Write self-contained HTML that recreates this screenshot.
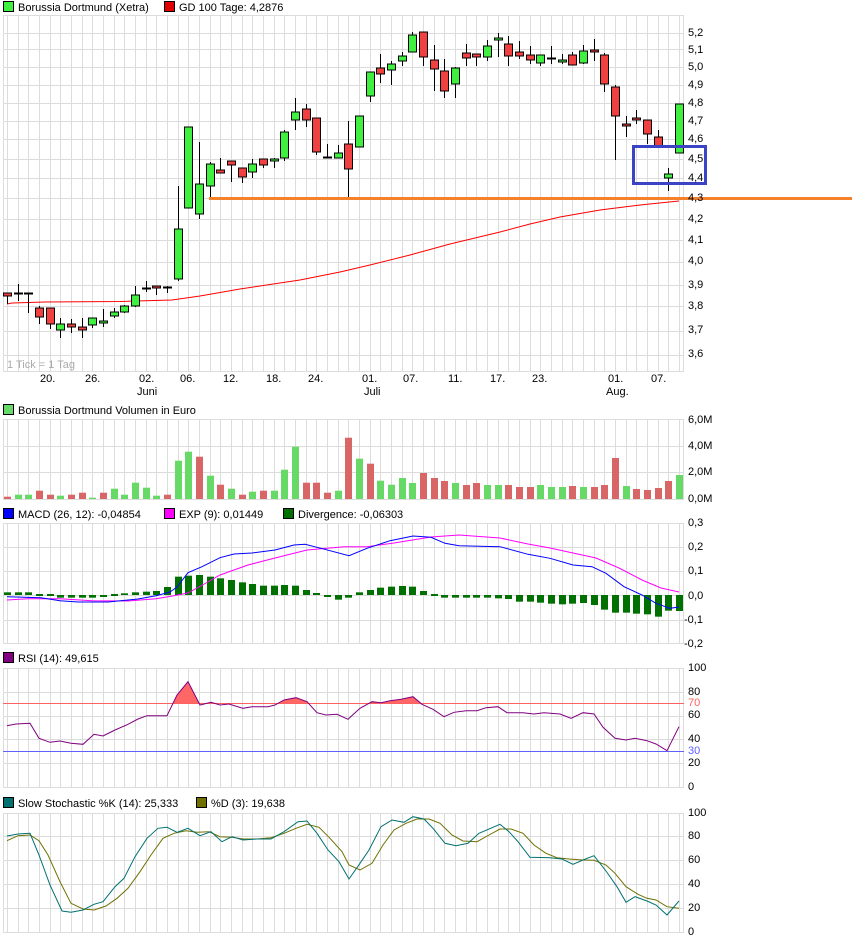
<!DOCTYPE html>
<html><head><meta charset="utf-8">
<style>
html,body{margin:0;padding:0;background:#fff;}
body{width:852px;height:940px;overflow:hidden;position:relative;font-family:"Liberation Sans",sans-serif;font-size:11px;color:#000;}
.t{position:absolute;white-space:nowrap;line-height:12px;}
.sq{display:inline-block;width:9px;height:9px;border:1px solid #000;vertical-align:-1px;margin-right:4px;}
svg{position:absolute;left:0;top:0;}
</style></head><body>
<svg id="g" width="852" height="940"></svg>

<div class="t" style="left:3px;top:1px"><span class="sq" style="background:#40f040"></span>Borussia Dortmund (Xetra)</div>
<div class="t" style="left:164px;top:1px"><span class="sq" style="background:#e00000"></span>GD 100 Tage: 4,2876</div>

<div class="t" style="left:688px;top:27px">5,2</div>
<div class="t" style="left:688px;top:44px">5,1</div>
<div class="t" style="left:688px;top:61px">5,0</div>
<div class="t" style="left:688px;top:79px">4,9</div>
<div class="t" style="left:688px;top:97px">4,8</div>
<div class="t" style="left:688px;top:115px">4,7</div>
<div class="t" style="left:688px;top:133px">4,6</div>
<div class="t" style="left:688px;top:153px">4,5</div>
<div class="t" style="left:688px;top:172px">4,4</div>
<div class="t" style="left:688px;top:192px">4,3</div>
<div class="t" style="left:688px;top:213px">4,2</div>
<div class="t" style="left:688px;top:234px">4,1</div>
<div class="t" style="left:688px;top:255px">4,0</div>
<div class="t" style="left:688px;top:279px">3,9</div>
<div class="t" style="left:688px;top:300px">3,8</div>
<div class="t" style="left:688px;top:324px">3,7</div>
<div class="t" style="left:688px;top:348px">3,6</div>
<div class="t" style="left:7px;top:359px;color:#aaa">1 Tick = 1 Tag</div>

<div class="t" style="left:40px;top:373px">20.</div>
<div class="t" style="left:85px;top:373px">26.</div>
<div class="t" style="left:139px;top:373px">02.</div>
<div class="t" style="left:137px;top:386px">Juni</div>
<div class="t" style="left:180px;top:373px">06.</div>
<div class="t" style="left:223px;top:373px">12.</div>
<div class="t" style="left:266px;top:373px">18.</div>
<div class="t" style="left:308px;top:373px">24.</div>
<div class="t" style="left:362px;top:373px">01.</div>
<div class="t" style="left:364px;top:386px">Juli</div>
<div class="t" style="left:403px;top:373px">07.</div>
<div class="t" style="left:448px;top:373px">11.</div>
<div class="t" style="left:490px;top:373px">17.</div>
<div class="t" style="left:532px;top:373px">23.</div>
<div class="t" style="left:608px;top:373px">01.</div>
<div class="t" style="left:606px;top:386px">Aug.</div>
<div class="t" style="left:651px;top:373px">07.</div>

<div class="t" style="left:3px;top:404px"><span class="sq" style="background:#66d966"></span>Borussia Dortmund Volumen in Euro</div>
<div class="t" style="left:688px;top:414px">6,0M</div>
<div class="t" style="left:688px;top:440px">4,0M</div>
<div class="t" style="left:688px;top:466px">2,0M</div>
<div class="t" style="left:688px;top:493px">0,0M</div>

<div class="t" style="left:3px;top:508px"><span class="sq" style="background:#0000ff"></span>MACD (26, 12): -0,04854</div>
<div class="t" style="left:164px;top:508px"><span class="sq" style="background:#ff00ff"></span>EXP (9): 0,01449</div>
<div class="t" style="left:283px;top:508px"><span class="sq" style="background:#007000"></span>Divergence: -0,06303</div>
<div class="t" style="left:688px;top:517px">0,3</div>
<div class="t" style="left:688px;top:541px">0,2</div>
<div class="t" style="left:688px;top:565px">0,1</div>
<div class="t" style="left:688px;top:590px">0,0</div>
<div class="t" style="left:684px;top:614px">-0,1</div>
<div class="t" style="left:684px;top:638px">-0,2</div>

<div class="t" style="left:3px;top:652px"><span class="sq" style="background:#800080"></span>RSI (14): 49,615</div>
<div class="t" style="left:688px;top:662px">100</div>
<div class="t" style="left:688px;top:686px">80</div>
<div class="t" style="left:688px;top:697px;color:#ff6060">70</div>
<div class="t" style="left:688px;top:709px">60</div>
<div class="t" style="left:688px;top:733px">40</div>
<div class="t" style="left:688px;top:745px;color:#6060ff">30</div>
<div class="t" style="left:688px;top:757px">20</div>
<div class="t" style="left:688px;top:781px">0</div>

<div class="t" style="left:3px;top:797px"><span class="sq" style="background:#007070"></span>Slow Stochastic %K (14): 25,333</div>
<div class="t" style="left:196px;top:797px"><span class="sq" style="background:#707000"></span>%D (3): 19,638</div>
<div class="t" style="left:688px;top:807px">100</div>
<div class="t" style="left:688px;top:830px">80</div>
<div class="t" style="left:688px;top:854px">60</div>
<div class="t" style="left:688px;top:878px">40</div>
<div class="t" style="left:688px;top:902px">20</div>
<div class="t" style="left:688px;top:926px">0</div>

<script>
var s='';
function X(i){return 7+i*10.6667;}
var GC='#dcdcdc';
function panel(top,bot,hl){
  s+='<rect x="3.5" y="'+(top+.5)+'" width="680" height="'+(bot-top)+'" fill="none" stroke="'+GC+'"/>';
  for(var i=0;i<64;i++){var x=Math.round(X(i))+.5;s+='<line x1="'+x+'" y1="'+top+'" x2="'+x+'" y2="'+bot+'" stroke="'+GC+'"/>';}
  hl.forEach(function(y){s+='<line x1="3" y1="'+(y+.5)+'" x2="684" y2="'+(y+.5)+'" stroke="'+GC+'"/>';});
}
panel(15,371,[33,49,67,85,103,121,139,159,178,198,219,240,262,285,306,331,355]);
panel(419,499,[446,472]);
panel(523,643,[547,571,595,620]);
panel(668,787,[692,716,739,763]);
panel(813,932,[836,860,884,908]);

// GD100
var gd=[[7,304],[12,303],[45,302],[120,301.5],[172,300],[200,296],[240,289],[300,280],[340,272],[370,265],[410,255],[450,244],[500,232],[530,224],[560,217],[600,210],[640,205],[679,201]];
s+='<polyline fill="none" stroke="#ff0000" stroke-width="1" points="'+gd.map(function(p){return p.join(',')}).join(' ')+'"/>';

// candles: [bodyTop,bodyBot,wickTop,wickBot,color]
var C=[[293,296,293,304,'r'],[293,293,284,301,'d'],[293,293,293,313,'d'],[308,317,306,324,'r'],[308,324,308,329,'r'],[324,330,318,338,'g'],[324,327,319,333,'r'],[327,330,318,338,'r'],[318,325,318,328,'g'],[321,323,309,327,'g'],[312,316,308,318,'g'],[306,312,305,313,'g'],[295,306,286,307,'g'],[288,289,281,292,'d'],[286,288,286,295,'r'],[287,287,286,293,'d'],[229,279,186,281,'g'],[127,208,127,208,'g'],[184,214,142,219,'g'],[164,186,162,197,'g'],[170,173,158,173,'r'],[161,165,161,182,'r'],[168,177,168,183,'r'],[164,172,159,178,'g'],[159,165,159,168,'r'],[159,161,158,168,'g'],[132,158,130,161,'g'],[112,120,98,130,'g'],[109,120,104,127,'r'],[118,152,118,155,'r'],[157,157,144,157,'d'],[153,158,145,158,'g'],[144,169,121,197,'r'],[116,147,116,147,'g'],[72,96,72,102,'g'],[68,74,54,83,'r'],[64,70,61,85,'g'],[56,61,52,66,'g'],[35,52,32,52,'g'],[32,57,32,66,'r'],[60,69,45,91,'r'],[71,91,59,98,'r'],[68,84,67,98,'g'],[53,58,44,66,'r'],[54,57,54,66,'r'],[46,57,40,61,'g'],[38,40,33,57,'g'],[44,56,36,66,'r'],[52,56,41,59,'r'],[55,60,46,64,'r'],[55,63,55,66,'g'],[58,58,46,64,'d'],[60,62,54,64,'g'],[55,65,52,65,'r'],[51,63,45,64,'g'],[50,52,39,61,'r'],[55,84,53,92,'r'],[87,116,85,160,'r'],[124,126,116,137,'r'],[118,120,110,124,'r'],[120,134,120,144,'r'],[137,147,130,147,'r'],[174,178,168,191,'g'],[104,153,104,153,'g']];
C.forEach(function(c,i){
  var x=Math.round(X(i))+.5;
  s+='<line x1="'+x+'" y1="'+c[2]+'" x2="'+x+'" y2="'+c[3]+'" stroke="#000"/>';
  if(c[4]=='d'){s+='<rect x="'+(x-4.5)+'" y="'+(c[0]-.5)+'" width="9" height="2" fill="#000"/>';}
  else{var h=Math.max(c[1]-c[0],2);s+='<rect x="'+(x-4)+'" y="'+c[0]+'" width="8" height="'+h+'" fill="'+(c[4]=='g'?'#40f040':'#f04040')+'" stroke="#000" stroke-width="1"/>';}
});
// orange line & blue box
s+='<rect x="209" y="197" width="643" height="3" fill="#f5822a"/>';
s+='<rect x="633.5" y="146.5" width="72" height="37" fill="none" stroke="#3b44c4" stroke-width="3"/>';

// volume
var V=[[496.7,'r'],[494.7,'g'],[494.7,'g'],[490.7,'r'],[494.7,'r'],[495.7,'g'],[494.7,'r'],[492.7,'r'],[497.7,'g'],[492.7,'r'],[488.7,'g'],[494.7,'g'],[482.7,'g'],[487.7,'g'],[495.7,'g'],[494.7,'r'],[460.7,'g'],[451.7,'g'],[456.7,'r'],[475.7,'g'],[484.7,'r'],[488.7,'g'],[494.7,'r'],[491.7,'g'],[490.7,'r'],[490.7,'g'],[469.7,'g'],[446.7,'g'],[482.7,'r'],[482.7,'r'],[492.7,'r'],[490.7,'g'],[437.7,'r'],[458.7,'g'],[463.7,'r'],[480.7,'g'],[484.7,'g'],[478,'g'],[483,'g'],[473,'r'],[478,'r'],[481,'r'],[483,'g'],[485,'r'],[483,'r'],[485,'g'],[485,'g'],[485,'r'],[487,'r'],[487,'r'],[485,'g'],[487,'g'],[487,'g'],[486,'r'],[487,'g'],[487,'r'],[485,'r'],[458,'r'],[486,'g'],[489,'r'],[490,'r'],[488,'r'],[481,'r'],[475,'g']];
V.forEach(function(v,i){var x=Math.round(X(i));s+='<rect x="'+(x-3)+'" y="'+v[0]+'" width="7" height="'+(499-v[0])+'" fill="'+(v[1]=='g'?'#66d966':'#d96666')+'"/>';});

// MACD histogram (values in zoom units, zero=270)
var H=[262,262,262,268,270,278,278,278,278,276,270,265,262,260,258,246,215,212,210,215,220,225,232,237,242,242,240,242,255,264,276,284,278,262,255,248,245,243,245,258,271,278,278,278,278,278,280,282,290,290,293,296,298,296,294,300,314,323,323,326,328,335,317,318];
H.forEach(function(v,i){var x=Math.round(X(i));var y=595+(v-270)/3;var t=Math.min(y,595),b=Math.max(y,595);if(b-t<1.5){t=594;b=596;}s+='<rect x="'+(x-3)+'" y="'+t+'" width="7" height="'+(b-t)+'" fill="#007000"/>';});
function pl(pts,col){s+='<polyline fill="none" stroke="'+col+'" stroke-width="1" points="'+pts.map(function(p){return p.join(',')}).join(' ')+'"/>';}
pl([[7,600],[28,598.7],[60,598.7],[92,600.7],[128,601],[156,598.7],[174,595.7],[188,593],[206,583],[220,575],[248,565],[275,558],[307,550],[344,546.7],[367,546.7],[394,543],[431,537],[459,535],[500,538],[528,544],[550,548],[596,558],[619,568],[642,580],[661,588],[679,592]],'#ff00ff');
pl([[7,596.7],[41,597.7],[60,600.7],[78,602],[108,602],[138,599],[156,595.7],[170,592],[177,587],[188,572.7],[202,566.7],[220,557.7],[234,554],[252,553],[275,550],[294,545],[305,544.3],[321,548.3],[349,555.7],[367,548.3],[390,540.7],[413,536],[431,537.3],[445,543.3],[459,545.7],[500,546.7],[528,554.3],[550,558.3],[573,565],[592,566.7],[606,573.3],[624,586.7],[642,595],[656,603.3],[670,608.3],[679,607]],'#0000ff');

// RSI
var R=[[7,725.7],[16,724],[30,723.3],[39,738.3],[50,742.3],[60,741],[71,743.3],[83,744.3],[94,734.3],[103,736],[115,730],[128,724.3],[138,719],[147,715.7],[167,715.7],[177,695],[188,681.7],[200,705],[211,702.3],[220,705],[229,704],[243,708.3],[252,706.7],[268,706.7],[275,705],[284,700],[296,697.7],[307,701.7],[317,712.7],[326,715],[337,714.3],[348,719.3],[360,708.3],[372,701.7],[381,702.7],[390,700.7],[401,699.3],[413,696.7],[422,704.3],[433,709.3],[444,716.7],[454,712.3],[466,710.7],[477,710.7],[486,707.7],[498,706.7],[507,712.7],[523,712.7],[534,714],[544,712.7],[560,714],[571,718.3],[583,712.7],[594,714],[603,727.3],[615,738.3],[626,740],[635,738.3],[647,740.7],[656,744],[667,750.7],[679,726.7]];
s+='<clipPath id="cp"><rect x="0" y="660" width="700" height="43.3"/></clipPath>';
s+='<polygon clip-path="url(#cp)" fill="#ff6666" points="7,787 '+R.map(function(p){return p.join(',')}).join(' ')+' 679,787"/>';
s+='<line x1="3" y1="703.5" x2="684" y2="703.5" stroke="#ff6060"/>';
s+='<line x1="3" y1="751.5" x2="684" y2="751.5" stroke="#6060ff"/>';
pl(R,'#800080');

// Stochastic
pl([[7,840.7],[18,835.7],[30,835],[39,840.7],[48,855],[60,881.7],[71,903.3],[83,909],[94,910],[106,906],[117,898.3],[128,888.3],[140,871.7],[151,855],[163,838.3],[174,833.3],[186,830.7],[197,832.3],[209,831.7],[220,836.7],[232,837.3],[243,839],[257,839],[271,837.7],[284,833.3],[296,828.3],[307,824.3],[319,827.3],[330,838.3],[342,851.7],[349,865],[360,870],[372,863.3],[383,845],[394,830],[406,823.3],[417,819],[429,819],[440,823.3],[452,835],[463,841],[477,841.7],[489,835],[500,829],[511,829],[523,833.3],[534,845],[546,853.3],[557,857.7],[569,859],[583,860],[594,860.3],[606,865],[615,873.3],[626,886.7],[638,894.3],[647,898.3],[656,900],[667,906.7],[679,908.3]],'#707000');
pl([[7,836],[18,834],[30,833.3],[39,855],[50,885],[62,911],[71,912.3],[83,910],[94,904.3],[103,901.7],[115,886.7],[124,878.3],[135,856.7],[147,838.3],[158,828.3],[167,827.3],[177,832.3],[188,828.3],[200,835.7],[211,831.7],[222,841.7],[232,836.7],[243,840],[257,839],[271,839],[284,831.7],[298,821.7],[307,821],[317,833.3],[328,850],[339,861.7],[349,879],[360,863.3],[369,850],[381,826.7],[392,820],[404,822.3],[413,816.7],[424,819],[433,828.3],[445,843.3],[456,845.7],[468,843.3],[479,833.3],[500,824.3],[509,831.7],[518,841.7],[530,857.3],[550,857.7],[562,859],[573,864.3],[583,860],[594,855.7],[606,871],[617,886.7],[626,902.3],[635,896.7],[647,901],[656,905],[667,915],[679,901]],'#007070');

document.getElementById('g').innerHTML=s;
</script>
</body></html>
